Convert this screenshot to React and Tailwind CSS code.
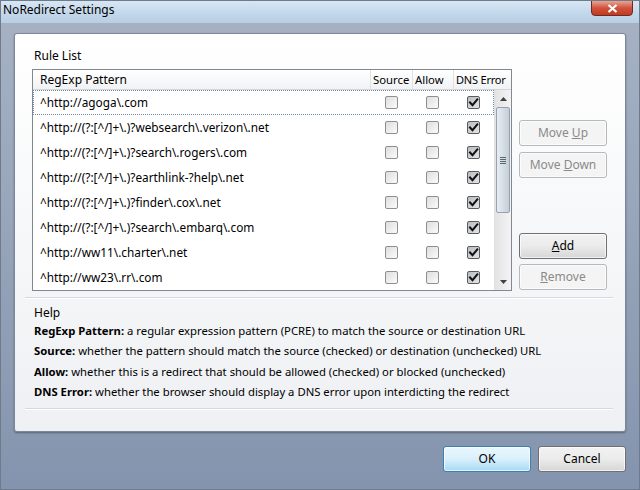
import React from "react";

const rules = [
  "^http://agoga\\.com",
  "^http://(?:[^/]+\\.)?websearch\\.verizon\\.net",
  "^http://(?:[^/]+\\.)?search\\.rogers\\.com",
  "^http://(?:[^/]+\\.)?earthlink-?help\\.net",
  "^http://(?:[^/]+\\.)?finder\\.cox\\.net",
  "^http://(?:[^/]+\\.)?search\\.embarq\\.com",
  "^http://ww11\\.charter\\.net",
  "^http://ww23\\.rr\\.com",
];

const help = [
  ["RegExp Pattern:", "a regular expression pattern (PCRE) to match the source or destination URL"],
  ["Source:", "whether the pattern should match the source (checked) or destination (unchecked) URL"],
  ["Allow:", "whether this is a redirect that should be allowed (checked) or blocked (unchecked)"],
  ["DNS Error:", "whether the browser should display a DNS error upon interdicting the redirect"],
];

function Check({ checked }) {
  return (
    <div
      className={`w-[13px] h-[13px] rounded-[2px] border flex items-center justify-center ${
        checked
          ? "border-[#5b5b5b] bg-linear-to-br from-[#b9bcc0] to-[#e4e6e8]"
          : "border-[#8f8f8f] bg-linear-to-br from-[#dedede] to-[#fbfbfb]"
      }`}
    >
      {checked && (
        <svg width="11" height="11" viewBox="0 0 11 11">
          <path d="M2 5.5 L4.5 8.2 L9.3 2.3" fill="none" stroke="#111" strokeWidth="2" strokeLinecap="square" />
        </svg>
      )}
    </div>
  );
}

function WinButton({ children, disabled, primary, className = "" }) {
  const look = disabled
    ? "border-[#b5b9bd] bg-[#f4f4f4] text-[#8a8a8a]"
    : primary
    ? "border-[#3c7fb1] bg-linear-to-b from-[#eaf6fd] via-[#d9f0fc] to-[#a7d9f5] text-black"
    : "border-[#707070] bg-linear-to-b from-[#f2f2f2] via-[#ebebeb] to-[#d6d6d6] text-black";
  return (
    <div className={`h-[26px] rounded-[3px] border flex items-center justify-center shadow-[inset_0_0_0_1px_rgba(255,255,255,0.7)] ${look} ${className}`}>
      <span>{children}</span>
    </div>
  );
}

function ScrollBar() {
  return (
    <div className="w-[17px] flex flex-col bg-linear-to-r from-[#e3e3e3] to-[#f4f4f4] border-l border-[#e0e0e0]">
      <div className="h-[17px] flex items-center justify-center">
        <svg width="7" height="4" viewBox="0 0 7 4">
          <path d="M0 4 L3.5 0 L7 4 Z" fill="#404040" />
        </svg>
      </div>
      <div className="mx-[1px] h-[106px] rounded-[2px] border border-[#97a2b0] bg-linear-to-r from-[#e8edf2] to-[#c5ced8] flex items-center justify-center">
        <div className="flex flex-col gap-[1px]">
          <div className="w-[6px] h-[1px] bg-[#5b6570]" />
          <div className="w-[6px] h-[1px] bg-[#5b6570]" />
          <div className="w-[6px] h-[1px] bg-[#5b6570]" />
          <div className="w-[6px] h-[1px] bg-[#5b6570]" />
        </div>
      </div>
      <div className="flex-1" />
      <div className="h-[17px] flex items-center justify-center">
        <svg width="7" height="4" viewBox="0 0 7 4">
          <path d="M0 0 L7 0 L3.5 4 Z" fill="#404040" />
        </svg>
      </div>
    </div>
  );
}

export default function App() {
  return (
    <div className="w-[640px] h-[490px] flex flex-col overflow-hidden text-[12px] text-black font-['Noto_Sans',sans-serif] border border-[#6f7a8a] bg-linear-to-b from-[#a7b3c4] to-[#8594ae]">
      {/* Title bar */}
      <div className="h-[22px] flex items-start justify-between bg-linear-to-b from-[#d8e6f3] via-[#c5d9ed] to-[#b9cde3] shrink-0">
        <span className="pl-[2px] pt-[1px] leading-[16px] text-[12px]">NoRedirect Settings</span>
        <div className="mr-[6px] w-[42px] h-[16px] -mt-[1px] rounded-b-[4px] border border-[#6e2a22] bg-linear-to-b from-[#e8a493] via-[#d0523c] to-[#c0391f] flex items-center justify-center">
          <svg width="11" height="9" viewBox="0 0 11 9">
            <path d="M1.5 1 L9.5 8 M9.5 1 L1.5 8" stroke="#fff" strokeWidth="2.2" />
          </svg>
        </div>
      </div>

      {/* Body */}
      <div className="flex-1 flex flex-col px-[13px] pt-[10px]">
        <div className="h-[399px] rounded-[3px] border border-[#7c8799] bg-linear-to-b from-[#ffffff] to-[#eef0f3] shadow-[0_1px_2px_rgba(0,0,0,0.35)] flex flex-col">
          <div className="flex pl-[17px] pt-[14px] gap-[7px]">
            <div className="flex flex-col w-[480px]">
              <span className="ml-[2px] leading-[16px]">Rule List</span>
              <div className="mt-[5px] h-[222px] border border-[#828790] bg-white flex flex-col">
                <div className="h-[20px] border-b border-[#d5d5d5] bg-linear-to-b from-[#ffffff] to-[#f1f2f4] flex leading-[19px] whitespace-nowrap">
                  <div className="flex-1 pl-[7px]">RegExp Pattern</div>
                  <div className="w-[42px] border-l border-[#dfe1e4] pl-[2px] text-[11.3px]">Source</div>
                  <div className="w-[41px] border-l border-[#dfe1e4] pl-[2px] text-[11.3px]">Allow</div>
                  <div className="w-[58px] border-l border-[#dfe1e4] pl-[2px] text-[11px] tracking-[-0.2px]">DNS Error</div>
                </div>
                <div className="flex-1 flex">
                  <div className="flex-1 flex flex-col">
                    {rules.map((r, i) => (
                      <div
                        key={r}
                        className={`h-[25px] flex items-center ${i === 0 ? "border border-dotted border-[#6f8aa6]" : "border border-transparent"}`}
                      >
                        <div className="flex-1 pl-[6px] whitespace-nowrap text-[11.8px]">{r}</div>
                        <div className="w-[42px] flex justify-center"><Check /></div>
                        <div className="w-[41px] flex justify-center"><Check /></div>
                        <div className="w-[40px] flex justify-center"><Check checked /></div>
                      </div>
                    ))}
                  </div>
                  <ScrollBar />
                </div>
              </div>
            </div>
            <div className="w-[88px] flex flex-col pt-[72px] pb-[1px]">
              <WinButton disabled>Move <u>U</u>p</WinButton>
              <WinButton disabled className="mt-[6px]">Move <u>D</u>own</WinButton>
              <div className="mt-auto flex flex-col gap-[5px]">
                <WinButton><u>A</u>dd</WinButton>
                <WinButton disabled><u>R</u>emove</WinButton>
              </div>
            </div>
          </div>

          <div className="mt-[6px] ml-[10px] mr-[12px] h-[2px] border-t border-[#d5d8dc] border-b border-b-white" />

          <div className="pl-[19px] pt-[6px] text-[11.3px]">
            <div className="leading-[16px] text-[12px]">Help</div>
            {help.map(([k, v]) => (
              <div key={k} className="leading-[20.3px] whitespace-nowrap">
                <span className="font-bold">{k}</span> {v}
              </div>
            ))}
          </div>

          <div className="mt-[6px] ml-[10px] mr-[12px] h-[2px] border-t border-[#d5d8dc] border-b border-b-white" />
        </div>

        <div className="flex justify-end gap-[7px] pt-[14px]">
          <WinButton primary className="w-[88px]">OK</WinButton>
          <WinButton className="w-[88px]">Cancel</WinButton>
        </div>
      </div>
    </div>
  );
}
